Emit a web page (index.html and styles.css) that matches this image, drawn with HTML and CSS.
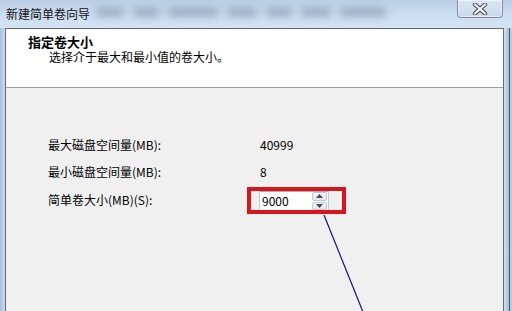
FILE: index.html
```html
<!DOCTYPE html>
<html lang="zh-CN">
<head>
  <meta charset="UTF-8" />
  <meta name="viewport" content="width=device-width, initial-scale=1.0"/>
  <title>新建简单卷向导</title>
  <link rel="stylesheet" href="styles.css">
</head>
<body>

  <div class="janela">
    <div class="barra">
      <div class="titulo-janela">新建简单卷向导</div>
      <div class="borrao">
        <span style="width:28px"></span>
        <span style="width:26px"></span>
        <span style="width:50px"></span>
        <span style="width:30px"></span>
        <span style="width:26px"></span>
        <span style="width:30px"></span>
        <span style="width:46px"></span>
      </div>
      <div class="fechar">
        <svg width="16" height="12" viewBox="0 0 16 12">
          <path d="M3 1.5 L13 10.5 M13 1.5 L3 10.5" stroke="#3b4656" stroke-width="4.2" stroke-linecap="round"/>
          <path d="M3 1.5 L13 10.5 M13 1.5 L3 10.5" stroke="#ffffff" stroke-width="2.2" stroke-linecap="round"/>
        </svg>
      </div>
    </div>

    <div class="moldura">
      <div class="borda-esq"></div>

      <div class="dialogo">
        <div class="cabecalho">
          <div class="titulo">指定卷大小</div>
          <div class="subtitulo">选择介于最大和最小值的卷大小。</div>
        </div>

        <div class="corpo">
          <div class="linha">
            <div class="rotulo">最大磁盘空间量(MB):</div>
            <div class="valor">40999</div>
          </div>
          <div class="linha">
            <div class="rotulo">最小磁盘空间量(MB):</div>
            <div class="valor">8</div>
          </div>
          <div class="linha linha-campo">
            <div class="rotulo">简单卷大小(MB)(S):</div>
            <div class="campo">
              <div class="texto">9000</div>
              <div class="setas">
                <div class="seta">
                  <svg width="7" height="4" viewBox="0 0 7 4"><path d="M0 4 L3.5 0 L7 4 Z" fill="#4a4a4a"/></svg>
                </div>
                <div class="seta">
                  <svg width="7" height="4" viewBox="0 0 7 4"><path d="M0 0 L3.5 4 L7 0 Z" fill="#4a4a4a"/></svg>
                </div>
              </div>
              <div class="marca"></div>
            </div>
          </div>

          <svg class="traco" viewBox="0 0 498 223" width="498" height="223">
            <line x1="318" y1="127" x2="357" y2="224" stroke="#14146a" stroke-width="1.2"/>
          </svg>
        </div>
      </div>

      <div class="borda-dir"></div>
    </div>
  </div>

</body>
</html>
```

FILE: styles.css
```css
body {
  margin: 0;
  width: 512px;
  height: 311px;
  overflow: hidden;
  background-color: #c3d5ea;
  font-family: "Noto Sans CJK SC", "DejaVu Sans", sans-serif;
  font-size: 12px;
  color: #000;
}

.janela {
  display: flex;
  flex-direction: column;
  height: 311px;
}

.barra {
  height: 28px;
  display: flex;
  align-items: flex-start;
  background: linear-gradient(#bccfe5, #cddff1 60%, #d4e3f3);
}

.titulo-janela {
  padding: 6px 0 0 6px;
  line-height: 16px;
  font-size: 12px;
  color: #111;
  white-space: nowrap;
}

.borrao {
  flex: 1;
  display: flex;
  gap: 9px;
  padding: 8px 0 0 6px;
}

.borrao span {
  height: 9px;
  background: rgba(70, 82, 104, 0.35);
  filter: blur(4px);
}

.fechar {
  width: 44px;
  height: 17px;
  margin-right: 9px;
  border: 1px solid #7d8ea3;
  border-top: none;
  border-radius: 0 0 4px 4px;
  background: linear-gradient(#dbe6f2, #c9d8e9);
  display: flex;
  align-items: center;
  justify-content: center;
  box-shadow: inset 0 0 0 1px rgba(255,255,255,0.5);
}

.moldura {
  flex: 1;
  display: flex;
}

.borda-esq {
  width: 5px;
  background: linear-gradient(90deg, #a9bfd9, #c8daee);
}

.borda-dir {
  width: 8px;
  background: linear-gradient(90deg, #d3e2f2, #aabdd4 60%, #3f4d60 70%, #b9cde3 80%);
}

.dialogo {
  flex: 1;
  display: flex;
  flex-direction: column;
  border: 1px solid #5d6b7d;
  border-bottom: none;
  background-color: #f0f0f0;
}

.cabecalho {
  height: 59px;
  box-sizing: border-box;
  background-color: #fff;
  border-bottom: 1px solid #a0a0a0;
  padding: 6px 0 0 22px;
  font-family: "Liberation Sans", "Noto Sans CJK SC", sans-serif;
}

.titulo {
  font-size: 13px;
  font-weight: bold;
  line-height: 16px;
}

.subtitulo {
  margin: 0 0 0 21px;
  line-height: 15px;
}

.corpo {
  flex: 1;
  position: relative;
  padding: 47px 0 0 42px;
  display: flex;
  flex-direction: column;
  gap: 7px;
}

.linha {
  display: flex;
  height: 20px;
  align-items: center;
}

.linha-campo {
  height: 22px;
  align-items: flex-end;
}

.linha-campo .rotulo {
  align-self: center;
}

.rotulo {
  width: 212px;
  line-height: 20px;
  white-space: nowrap;
}

.valor {
  line-height: 20px;
}

.campo {
  position: relative;
  width: 70px;
  height: 20px;
  box-sizing: border-box;
  border: 1px solid #c5cbd3;
  border-top-color: #abadb3;
  background: #fff;
  display: flex;
  margin-left: -1px;
}

.texto {
  flex: 1;
  padding-left: 2px;
  line-height: 18px;
}

.setas {
  width: 15px;
  display: flex;
  flex-direction: column;
  gap: 1px;
  padding: 0 1px 0 0;
}

.seta {
  flex: 1;
  display: flex;
  align-items: center;
  justify-content: center;
  border: 1px solid #c3c9d1;
  border-radius: 2px;
  background: linear-gradient(#f4f6f8, #e2e6eb);
}

.marca {
  position: absolute;
  left: -13px;
  right: -18px;
  top: -5px;
  bottom: -4px;
  border: 4px solid #d8141c;
}

.traco {
  position: absolute;
  left: 0;
  top: 0;
  overflow: visible;
  pointer-events: none;
}
```
